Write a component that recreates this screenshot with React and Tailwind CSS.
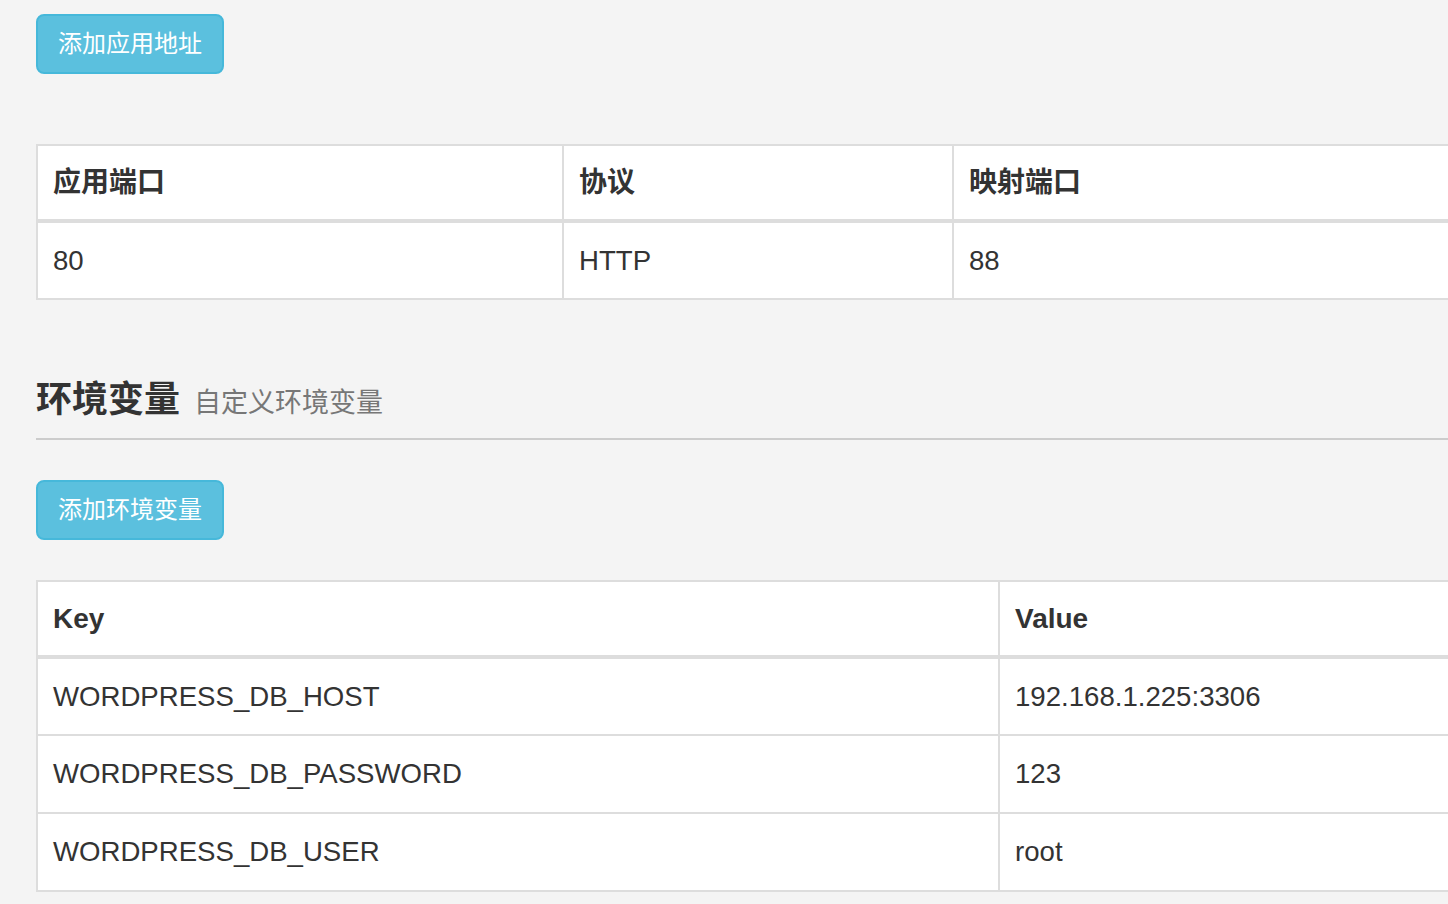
import React from 'react';

const ports = [{ port: '80', protocol: 'HTTP', mapped: '88' }];

const envs = [
  { key: 'WORDPRESS_DB_HOST', value: '192.168.1.225:3306' },
  { key: 'WORDPRESS_DB_PASSWORD', value: '123' },
  { key: 'WORDPRESS_DB_USER', value: 'root' },
];

const font = { fontFamily: '"Liberation Sans", "Noto Sans CJK SC", sans-serif' };

const Button = ({ children }) => (
  <button
    type="button"
    className="h-[60px] px-[20px] rounded-[8px] border-2 border-[#46b8da] bg-[#5bc0de] text-white text-[24px] leading-[56px]"
  >
    {children}
  </button>
);

const th = 'border-2 border-b-4 border-[#dddddd] pl-[15px] pr-[16px] h-[76px] text-left align-middle font-bold text-[28px] text-[#333333]';
const td = 'border-2 border-[#dddddd] pl-[15px] pr-[16px] h-[78px] text-left align-middle text-[27.6px] text-[#333333]';

export default function App() {
  return (
    <div className="w-screen min-h-screen overflow-hidden bg-[#f4f4f4]" style={font}>
      <div className="pl-[36px] pt-[14px] pb-[40px]">
        <Button>添加应用地址</Button>

        {/* 端口映射 */}
        <table className="mt-[70px] w-[1600px] border-collapse bg-white table-fixed">
          <colgroup>
            <col className="w-[526px]" />
            <col className="w-[390px]" />
            <col />
          </colgroup>
          <thead>
            <tr>
              <th className={th}>应用端口</th>
              <th className={th}>协议</th>
              <th className={th}>映射端口</th>
            </tr>
          </thead>
          <tbody>
            {ports.map((p) => (
              <tr key={p.port}>
                <td className={td}>{p.port}</td>
                <td className={td}>{p.protocol}</td>
                <td className={td}>{p.mapped}</td>
              </tr>
            ))}
          </tbody>
        </table>

        {/* 环境变量 */}
        <div className="mt-[80px] pb-[15px] border-b-2 border-[#cccccc] w-[1600px]">
          <h2 className="text-[36px] leading-[40px] font-bold text-[#333333]">
            环境变量
            <small className="ml-[14px] text-[27px] font-normal text-[#777777]">自定义环境变量</small>
          </h2>
        </div>

        <div className="mt-[40px]">
          <Button>添加环境变量</Button>
        </div>

        <table className="mt-[40px] w-[1600px] border-collapse bg-white table-fixed">
          <colgroup>
            <col className="w-[962px]" />
            <col />
          </colgroup>
          <thead>
            <tr>
              <th className={th}>Key</th>
              <th className={th}>Value</th>
            </tr>
          </thead>
          <tbody>
            {envs.map((e) => (
              <tr key={e.key}>
                <td className={td}>{e.key}</td>
                <td className={td}>{e.value}</td>
              </tr>
            ))}
          </tbody>
        </table>
      </div>
    </div>
  );
}
